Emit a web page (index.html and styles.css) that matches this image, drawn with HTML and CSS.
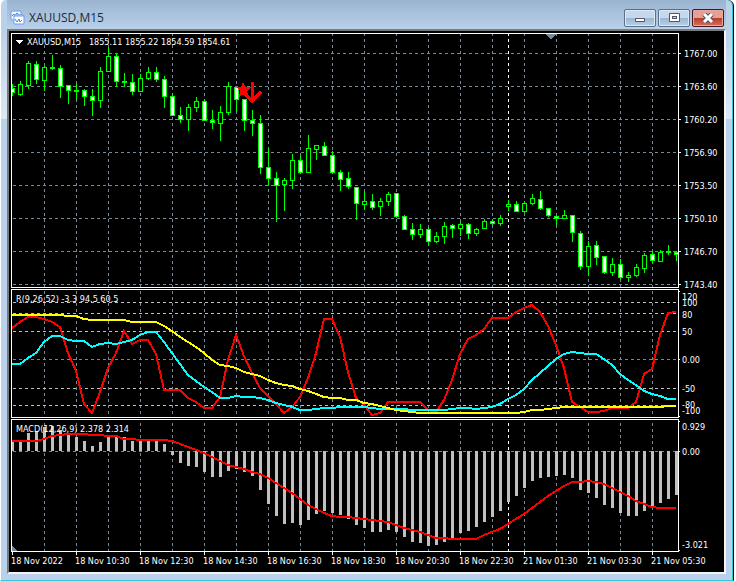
FILE: index.html
```
<!DOCTYPE html>
<html lang="en">
<head>
    <meta charset="UTF-8">
    <meta name="viewport" content="width=device-width, initial-scale=1.0">
    <title>XAUUSD,M15</title>
    <link rel="stylesheet" href="styles.css">
</head>
<body>

    <div class="window">
        <header class="title-bar">
            <svg class="app-icon" width="15" height="15" viewBox="0 0 15 15">
                <rect x="1" y="1" width="10" height="9" rx="1" fill="#eef5ff" stroke="#6a9ce8"/>
                <path d="M2 6l2-2 1 2 2-3 2 2" fill="none" stroke="#4a86dc"/>
                <rect x="4" y="5" width="10" height="9" rx="1" fill="#fff" stroke="#6a9ce8"/>
                <path d="M4 6h10" stroke="#6a9ce8"/>
                <path d="M5 9l2 3 2-3 1 3 2-2" fill="none" stroke="#4a86dc"/>
            </svg>
            <h1>XAUUSD,M15</h1>
            <div class="controls">
                <button type="button" aria-label="Minimize">
                    <svg width="12" height="10" viewBox="0 0 12 10">
                        <rect x="1" y="5" width="10" height="4" rx="1" fill="#535666"/>
                        <rect x="2" y="6" width="8" height="2" fill="#fff"/>
                    </svg>
                </button>
                <button type="button" aria-label="Maximize">
                    <svg width="12" height="10" viewBox="0 0 12 10">
                        <rect x="1" y="0" width="11" height="9" rx="1" fill="#535666"/>
                        <rect x="2" y="1" width="9" height="7" fill="#fff"/>
                        <rect x="4" y="3" width="5" height="3" fill="#535666"/>
                        <rect x="5" y="4" width="3" height="1" fill="#b8d0ea"/>
                    </svg>
                </button>
                <button type="button" class="close" aria-label="Close">
                    <svg width="12" height="10" viewBox="0 0 12 10">
                        <path d="M2 1l8 8M10 1l-8 8" stroke="#535666" stroke-width="5"/>
                        <path d="M2 1l8 8M10 1l-8 8" stroke="#fff" stroke-width="3"/>
                    </svg>
                </button>
            </div>
        </header>

        <main class="chart">
            <svg class="panel" id="price"></svg>
            <svg class="panel" id="oscillator"></svg>
            <svg class="panel" id="macd"></svg>
            <div class="dates">
                <span>18 Nov 2022</span>
                <span>18 Nov 10:30</span>
                <span>18 Nov 12:30</span>
                <span>18 Nov 14:30</span>
                <span>18 Nov 16:30</span>
                <span>18 Nov 18:30</span>
                <span>18 Nov 20:30</span>
                <span>18 Nov 22:30</span>
                <span>21 Nov 01:30</span>
                <span>21 Nov 03:30</span>
                <span>21 Nov 05:30</span>
            </div>
        </main>
    </div>

    <script src="chart.js"></script>
</body>
</html>
```

FILE: styles.css
```
* {
    box-sizing: border-box;
}

body {
    margin: 0;
    background-color: #fff;
    font-family: "DejaVu Sans Condensed", "DejaVu Sans", sans-serif;
}

.window {
    margin-right: 2px;
    padding: 0 7px 6px 6px;
    border-left: 1px solid #fff;
    border-right: 1px solid #000;
    border-bottom: 1px solid #32c8dc;
    border-radius: 6px 6px 0 0;
    box-shadow: inset -1px 0 #32c8dc;
    background:
        linear-gradient(#bad1ea 30px, #dde8f5 119px, transparent 119px) left / 6px 100% no-repeat,
        linear-gradient(#bad1ea 30px, #dde8f5 119px, transparent 119px) right / 7px 100% no-repeat,
        linear-gradient(#99b4d1 0, #b9d1ea 29px);
}

.title-bar {
    display: flex;
    align-items: center;
    height: 29px;
    padding: 6px 2px 0 3px;
    background: linear-gradient(#9ab4d0, #b9d1ea);
}

.app-icon {
    margin-right: 4px;
}

h1 {
    flex: 1;
    margin: 0;
    font-family: "Open Sans", sans-serif;
    font-size: 12px;
    line-height: 18px;
    font-weight: normal;
    color: #1c2a3c;
}

.controls {
    display: flex;
    gap: 2px;
}

.controls button {
    display: flex;
    align-items: center;
    justify-content: center;
    width: 32px;
    height: 18px;
    padding: 0;
    border: 1px solid #5c6f86;
    border-radius: 2px;
    box-shadow: inset 0 0 0 1px #dce8f5;
    background: linear-gradient(#c6d8ec 50%, #9bb5d1 50%, #b8d0e8);
}

.controls .close {
    border-color: #4a1420;
    box-shadow: inset 0 0 0 1px #e8a89c;
    background: linear-gradient(#e4a094 50%, #b83c28 50%, #d4705c);
}

.chart {
    display: flex;
    flex-direction: column;
    gap: 1px;
    padding: 2px 0 6px 2px;
    border: 2px solid #7a7a7a;
    border-right-color: #f4f4f0;
    border-bottom-color: #f4f4f0;
    background-color: #000;
    color: #fff;
    font-size: 9px;
}

.panel {
    display: block;
    width: 100%;
    overflow: visible;
    shape-rendering: crispEdges;
}

#price {
    height: 255px;
}

#oscillator {
    height: 129px;
}

#macd {
    height: 136px;
}

.dates {
    display: flex;
    line-height: 10px;
    white-space: nowrap;
}

.dates span {
    flex: 0 0 64px;
}

.panel text {
    fill: #fff;
    white-space: pre;
}

.frame {
    fill: #fff;
}

.grid {
    fill: #778899;
}

.level {
    fill: #c0c0c0;
}

.day {
    fill: #fff;
}

.bull {
    fill: #00ff00;
}

.hollow {
    fill: #000;
}

.filled {
    fill: #fff;
}

.bar {
    fill: #c0c0c0;
}

.line {
    fill: none;
    stroke-width: 2;
}

.red {
    stroke: #ff0000;
}

.aqua {
    stroke: #00ffff;
}

.yellow {
    stroke: #ffff00;
}

.signal {
    fill: #ff0000;
}

.signal-arrow {
    fill: none;
    stroke: #ff0000;
    stroke-width: 3;
}
```

FILE: chart.js
```
// all coordinates are chart coordinates, one bar every 8px
const LEFT = 11;
const AXIS = 46;
const STEP = 8;

// [high, body top, body bottom, low, filled]
const candles = [
    [84, 88, 93, 96, 1], [81, 84, 95, 96, 0], [61, 63, 86, 89, 0], [61, 64, 80, 84, 1],
    [66, 67, 81, 91, 0], [55, 67, 69, 70, 0], [65, 68, 87, 98, 1], [85, 85, 91, 104, 1],
    [83, 90, 92, 100, 0], [89, 90, 97, 106, 1], [89, 96, 101, 116, 1], [67, 71, 101, 108, 0],
    [47, 56, 72, 72, 0], [54, 56, 82, 87, 1], [73, 81, 83, 87, 0], [74, 82, 92, 95, 1],
    [74, 78, 92, 92, 0], [67, 72, 79, 80, 0], [67, 72, 80, 82, 1], [76, 79, 97, 108, 1],
    [93, 96, 116, 116, 1], [107, 115, 120, 123, 1], [104, 107, 120, 131, 0], [97, 101, 108, 112, 0],
    [99, 101, 121, 121, 1], [110, 120, 123, 129, 1], [106, 112, 124, 141, 0], [82, 86, 113, 115, 0],
    [87, 87, 100, 112, 1], [99, 99, 121, 131, 1], [110, 120, 124, 136, 1], [115, 123, 168, 174, 1],
    [148, 167, 179, 185, 1], [172, 178, 186, 222, 1], [178, 180, 185, 211, 0], [154, 160, 181, 189, 0],
    [155, 160, 173, 174, 1], [135, 148, 173, 173, 0], [145, 145, 150, 160, 0], [142, 146, 156, 156, 1],
    [151, 155, 173, 174, 1], [170, 172, 180, 191, 1], [172, 178, 187, 189, 1], [187, 187, 204, 220, 1],
    [191, 201, 205, 210, 0], [194, 201, 208, 210, 1], [198, 201, 207, 216, 0], [192, 194, 202, 206, 0],
    [193, 193, 217, 218, 1], [215, 216, 230, 230, 1], [223, 229, 235, 240, 1], [224, 229, 235, 238, 0],
    [227, 229, 242, 246, 1], [232, 236, 242, 243, 0], [222, 226, 237, 244, 0], [224, 225, 229, 238, 1],
    [221, 224, 229, 236, 0], [223, 224, 234, 239, 1], [228, 229, 234, 236, 0], [219, 221, 229, 229, 0],
    [219, 221, 224, 225, 1], [215, 218, 224, 226, 0], [200, 204, 207, 211, 0], [201, 204, 212, 212, 1],
    [201, 203, 212, 213, 0], [194, 198, 204, 205, 0], [191, 199, 209, 210, 1], [208, 208, 216, 217, 1],
    [216, 216, 219, 225, 1], [210, 215, 219, 219, 0], [215, 215, 233, 242, 1], [231, 233, 267, 270, 1],
    [241, 246, 267, 276, 0], [241, 245, 258, 265, 1], [256, 256, 273, 274, 1], [258, 264, 273, 276, 0],
    [259, 264, 278, 280, 1], [272, 275, 278, 282, 0], [264, 267, 276, 277, 0], [253, 255, 269, 273, 0],
    [251, 254, 261, 263, 1], [250, 252, 262, 262, 0], [245, 251, 253, 255, 0], [251, 252, 255, 261, 1]
];

const fast = [
    328, 322, 317, 317, 319, 322, 327, 353, 371, 404, 413, 392, 368, 353, 331, 344, 340, 340, 354, 390, 390,
    390, 398, 402, 408, 408, 397, 360, 335, 356, 373, 388, 396, 404, 413, 407, 397, 378, 353, 319, 319, 337,
    372, 398, 405, 415, 413, 402, 402, 402, 402, 402, 410, 412, 400, 380, 354, 339, 335, 329, 318, 318, 318,
    312, 308, 305, 312, 326, 345, 368, 402, 407, 412, 412, 411, 408, 408, 408, 402, 374, 369, 335, 313, 312
];

const middle = [
    364, 364, 358, 353, 342, 336, 336, 340, 341, 341, 347, 344, 343, 344, 342, 340, 335, 332, 332, 342, 353,
    364, 375, 381, 387, 392, 398, 398, 396, 397, 397, 398, 400, 403, 405, 407, 410, 410, 409, 408, 408, 407,
    407, 407, 407, 408, 409, 409, 409, 409, 410, 410, 410, 410, 410, 409, 408, 408, 409, 408, 407, 404, 399,
    395, 389, 380, 373, 366, 359, 354, 352, 353, 354, 354, 359, 365, 374, 380, 385, 391, 394, 396, 399, 399
];

const slow = [
    315, 315, 315, 315, 315, 315, 315, 316, 316, 319, 320, 320, 320, 320, 320, 322, 322, 322, 322, 326, 331,
    337, 342, 347, 353, 360, 365, 366, 368, 372, 374, 376, 380, 383, 385, 386, 389, 391, 394, 397, 398, 398,
    400, 400, 403, 404, 406, 408, 410, 411, 412, 413, 413, 413, 413, 413, 413, 413, 413, 413, 413, 413, 413,
    413, 412, 410, 410, 409, 408, 407, 407, 407, 407, 407, 407, 407, 407, 407, 407, 407, 407, 407, 406, 406
];

const histogram = [
    442, 442, 433, 431, 427, 426, 430, 434, 437, 441, 446, 442, 436, 436, 437, 441, 441, 441, 441, 444, 455,
    463, 466, 467, 472, 477, 477, 471, 469, 472, 476, 490, 504, 516, 524, 523, 525, 520, 514, 511, 513, 515,
    519, 525, 528, 532, 532, 530, 532, 537, 542, 543, 546, 545, 542, 539, 533, 531, 527, 522, 517, 511, 502,
    496, 488, 481, 478, 477, 476, 475, 478, 490, 493, 498, 505, 508, 513, 516, 516, 511, 508, 503, 499, 495
];

const signal = [
    441, 441, 441, 441, 439, 436, 435, 434, 434, 434, 435, 435, 436, 436, 439, 439, 440, 440, 440, 440, 441,
    444, 447, 450, 453, 457, 461, 465, 467, 469, 472, 474, 478, 483, 488, 493, 499, 505, 509, 513, 516, 517,
    517, 518, 519, 520, 521, 522, 525, 528, 530, 532, 535, 538, 538, 539, 539, 539, 539, 535, 532, 529, 524,
    519, 514, 508, 502, 496, 491, 486, 482, 482, 481, 482, 484, 488, 492, 496, 501, 504, 507, 508, 508, 508
];

const barX = i => LEFT + 1 + i * STEP;

function rect(x, y, w, h, cls) {
    return `<rect class="${cls}" x="${x}" y="${y}" width="${w}" height="${h}"/>`;
}

function text(x, y, str) {
    return `<text x="${x}" y="${y}">${str}</text>`;
}

function dashRow(y, right, cls) {
    let d = "";
    for (let x = LEFT + 2; x < right; x += 6) {
        d += `M${x} ${y}h${Math.min(3, right - x)}v1H${x}z`;
    }
    return `<path class="${cls}" d="${d}"/>`;
}

function dashColumn(x, top, bottom, cls) {
    let d = "";
    for (let y = top - (top + 3) % 6; y < bottom; y += 6) {
        const from = Math.max(y, top);
        const to = Math.min(y + 3, bottom);
        if (to > from) {
            d += `M${x} ${from}h1V${to}h-1z`;
        }
    }
    return `<path class="${cls}" d="${d}"/>`;
}

function polyline(values, cls) {
    const points = values.map((y, i) => `${barX(i)},${y}`).join(" ");
    return `<polyline class="line ${cls}" points="${points}"/>`;
}

function grid(top, bottom, right) {
    let out = "";
    for (let x = 44; x < right; x += 32) {
        out += dashColumn(x, top + 1, bottom, "grid");
    }
    return out + dashColumn(508, top + 1, bottom, "day");
}

function frame(top, bottom, right) {
    return rect(LEFT, top, right - LEFT + 1, 1, "frame") +
        rect(LEFT, bottom, right - LEFT + 1, 1, "frame") +
        rect(LEFT, top, 1, bottom - top, "frame") +
        rect(right, top, 1, bottom - top, "frame");
}

function show(id, top, build) {
    const svg = document.getElementById(id);
    const width = svg.clientWidth;
    const height = svg.clientHeight;
    svg.setAttribute("viewBox", `${LEFT} ${top} ${width} ${height}`);
    svg.innerHTML = build(LEFT + width - AXIS);
}

function drawPrice(right) {
    let out = grid(33, 287, right);
    const labels = ["1767.00", "1763.60", "1760.20", "1756.90", "1753.50", "1750.10", "1746.70", "1743.40"];
    labels.forEach((label, i) => {
        const y = 53 + i * 33;
        out += dashRow(y, right, "grid") + rect(right + 1, y, 2, 1, "frame") + text(right + 6, y + 4, label);
    });
    candles.forEach(([high, open, close, low, filled], i) => {
        const x = barX(i);
        // the first candle is cut by the frame
        const clip = i === 0 ? 2 : 0;
        out += rect(x, high, 1, low - high, "bull");
        out += rect(x - 2 + clip, open, 5 - clip, close - open, "bull");
        if (close - open > 2) {
            out += rect(x - 1 + clip / 2, open + 1, 3 - clip / 2, close - open - 2, filled ? "filled" : "hollow");
        }
    });
    // sell signal
    out += `<path class="signal" d="M243 82l3 5 5 0-4 4 2 6-5-3-5 3 1-6-4-4 5 0z"/>`;
    out += `<path class="signal-arrow" d="M252 82v20M244 93l8 8 9-9"/>`;
    // chart shift marker and one-click toggle
    out += `<path class="grid" d="M545 34h11l-5 5h-1z"/>`;
    out += `<path class="frame" d="M15 40h8l-4 4z"/>`;
    out += text(27, 45, "XAUUSD,M15   1855.11 1855.22 1854.59 1854.61");
    return out + frame(33, 287, right);
}

function drawOscillator(right) {
    let out = grid(289, 417, right) + dashRow(359, right, "grid");
    [302, 313, 331, 388, 405].forEach(y => {
        out += dashRow(y, right, "level");
    });
    out += polyline(fast, "red") + polyline(middle, "aqua") + polyline(slow, "yellow");
    const labels = [[300, "120"], [306, "100"], [318, "80"], [335, "50"], [363, "0.00"], [392, "-50"], [408, "-80"], [414, "-100"]];
    labels.forEach(([y, label]) => {
        out += text(right + 4, y, label);
    });
    [291, 359, 416].forEach(y => {
        out += rect(right + 1, y, 1, 1, "frame");
    });
    out += text(16, 302, "R(9,26,52) -3.3 94.5 60.5");
    return out + frame(289, 417, right);
}

function drawMacd(right) {
    let out = grid(419, 551, right) + dashRow(451, right, "grid");
    histogram.forEach((y, i) => {
        const x = Math.max(barX(i) - 1, LEFT + 1);
        out += rect(x, Math.min(y, 451), barX(i) + 2 - x, Math.abs(y - 451), "bar");
    });
    out += polyline(signal, "red");
    out += `<path class="grid" d="M12 546l5 5h-5z"/>`;
    out += text(right + 4, 430, "0.929") + text(right + 4, 455, "0.00") + text(right + 4, 548, "-3.021");
    [421, 451, 550].forEach(y => {
        out += rect(right + 1, y, 1, 1, "frame");
    });
    for (let x = LEFT + 1; x < right; x += 64) {
        out += rect(x, 552, 1, 3, "frame");
    }
    out += text(16, 432, "MACD(12,26,9) 2.378 2.314");
    return out + frame(419, 551, right);
}

function draw() {
    show("price", 33, drawPrice);
    show("oscillator", 289, drawOscillator);
    show("macd", 419, drawMacd);
}

window.addEventListener("resize", draw);
draw();
```
